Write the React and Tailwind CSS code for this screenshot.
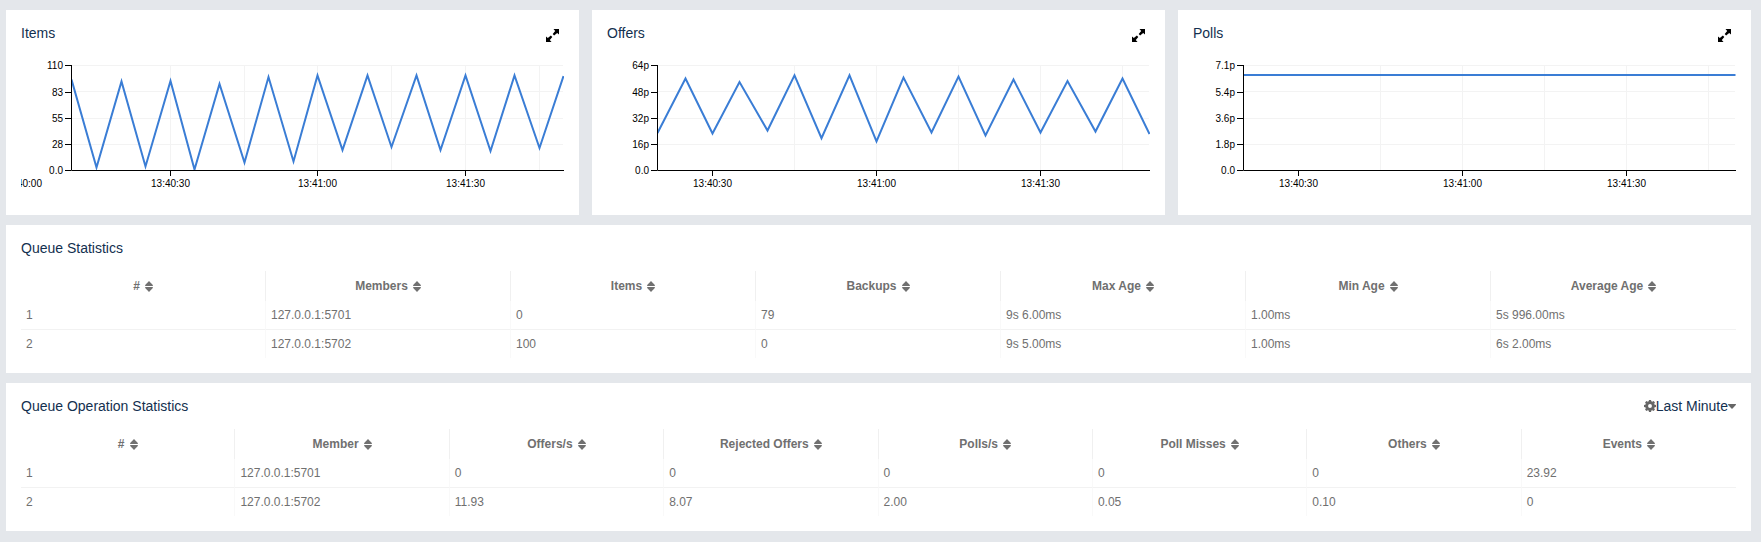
import React from "react";

const CHARTS = [
  {
    title: "Items",
    yLabels: ["110", "83", "55", "28", "0.0"],
    grid: [149.5, 223.5, 296.5, 370.5, 444.5, 518.5],
    ticks: [[1.5, "13:40:00"], [149.5, "13:40:30"], [296.5, "13:41:00"], [444.5, "13:41:30"]],
    line: "50.5,38.5 75.5,126.5 100.5,40.5 124.5,125.5 149.5,40 173.5,128.5 198.5,43 223.5,121.5 247.5,36 272.5,120.5 296.5,34.5 321.5,109 346.5,34.5 370.5,106 395.5,34.5 419.5,109 444.5,34.5 469.5,110 493.5,34.5 518.5,107 542.5,35",
  },
  {
    title: "Offers",
    yLabels: ["64p", "48p", "32p", "16p", "0.0"],
    grid: [187.5, 269.5, 351.5, 433.5, 515.5],
    ticks: [[105.5, "13:40:30"], [269.5, "13:41:00"], [433.5, "13:41:30"]],
    line: "50.5,92 78.5,37.5 105.5,92.5 132.5,41 160.5,89.5 187.5,34.3 214.5,97.2 242.5,34.3 269.5,100.3 296.5,36.6 324.5,91.4 351.5,35.6 378.5,94.5 406.5,38.5 433.5,91.5 460.5,40 488.5,90.5 515.5,37.5 542.5,93",
  },
  {
    title: "Polls",
    yLabels: ["7.1p", "5.4p", "3.6p", "1.8p", "0.0"],
    grid: [187.5, 269.5, 351.5, 433.5, 515.5],
    ticks: [[105.5, "13:40:30"], [269.5, "13:41:00"], [433.5, "13:41:30"]],
    line: "50.5,34 542.5,34",
  },
];

const GRID_Y = [24.5, 50.5, 77.5, 103.5];
const TICK_Y = [24.5, 51.5, 77.5, 103.5, 129.5];

const QUEUE_STATS = {
  columns: ["#", "Members", "Items", "Backups", "Max Age", "Min Age", "Average Age"],
  rows: [
    ["1", "127.0.0.1:5701", "0", "79", "9s 6.00ms", "1.00ms", "5s 996.00ms"],
    ["2", "127.0.0.1:5702", "100", "0", "9s 5.00ms", "1.00ms", "6s 2.00ms"],
  ],
};

const OPERATION_STATS = {
  columns: ["#", "Member", "Offers/s", "Rejected Offers", "Polls/s", "Poll Misses", "Others", "Events"],
  rows: [
    ["1", "127.0.0.1:5701", "0", "0", "0", "0", "0", "23.92"],
    ["2", "127.0.0.1:5702", "11.93", "8.07", "2.00", "0.05", "0.10", "0"],
  ],
};

const GEAR_TEETH = [0, 45, 90, 135];

function ExpandIcon() {
  return (
    <svg viewBox="0 0 13 13" className="block size-[13px] fill-black" aria-hidden="true">
      <path d="M7.5 0H13V5.500L11.200 3.900L8.100 6.500L6.700 5.100L9.200 1.900Z" />
      <path d="M5.500 13H0V7.500L1.800 9.100L4.900 6.500L6.300 7.900L3.800 11.100Z" />
    </svg>
  );
}

function SortIcon() {
  return (
    <svg viewBox="0 0 8 11" className="block h-[11px] w-2 shrink-0 fill-current" aria-hidden="true">
      <path d="M4 0L7.800 3.900Q8.300 5 7.400 5H.6Q-.3 5 .2 3.900Z" />
      <path d="M4 11L7.800 7.100Q8.300 6 7.400 6H.6Q-.3 6 .2 7.100Z" />
    </svg>
  );
}

function GearIcon() {
  return (
    <svg viewBox="-6 -6 12 12" className="block size-3" aria-hidden="true">
      <circle r="3.300" className="fill-none stroke-[#666] stroke-[2.700px]" />
      {GEAR_TEETH.map((angle) => (
        <g key={angle} transform={`rotate(${angle})`} className="fill-[#666]">
          <path d="M-1.500 -4L-1 -6H1L1.500 -4Z" />
          <path d="M-1.500 4L-1 6H1L1.500 4Z" />
        </g>
      ))}
    </svg>
  );
}

function ChartCard({ chart, index }) {
  const clip = `plot-${index}`;
  return (
    <section className="min-w-0 bg-white p-[15px]">
      <header className="flex h-4 items-start justify-between">
        <h2 className="text-sm leading-4 text-[#13304f]">{chart.title}</h2>
        <button type="button" aria-label={`Expand ${chart.title}`} className="mt-1 mr-[5px] cursor-pointer">
          <ExpandIcon />
        </button>
      </header>
      <svg viewBox="0 0 543 159" className="block h-auto w-full overflow-hidden" role="img" aria-label={`${chart.title} over time`}>
        <clipPath id={clip}>
          <rect x="50" y="24" width="493" height="106" />
        </clipPath>
        <g className="stroke-[#f3f3f3]">
          {GRID_Y.map((y) => <line key={y} x1="51" x2="542" y1={y} y2={y} />)}
          {chart.grid.map((x) => <line key={x} x1={x} x2={x} y1="25" y2="129" />)}
        </g>
        <polyline points={chart.line} clipPath={`url(#${clip})`} className="fill-none stroke-[#3a7dd5] stroke-2" />
        <g className="fill-none stroke-black">
          <path d="M50.500 24V129.500H543" />
          {TICK_Y.map((y) => <line key={y} x1="44" x2="50" y1={y} y2={y} />)}
          {chart.ticks.filter(([x]) => x > 50).map(([x]) => <line key={x} x1={x} x2={x} y1="129" y2="135" />)}
        </g>
        <g className="fill-black text-[10px]">
          {chart.yLabels.map((label, i) => (
            <text key={label} x="42" y={TICK_Y[i] + 3.5} textAnchor="end">{label}</text>
          ))}
          {chart.ticks.map(([x, label]) => (
            <text key={label} x={x} y="146" textAnchor="middle">{label}</text>
          ))}
        </g>
      </svg>
    </section>
  );
}

function StatsPanel({ title, table, children }) {
  return (
    <section className="bg-white p-[15px]">
      <header className="mb-[15px] flex h-4 items-center justify-between">
        <h2 className="text-sm leading-4 text-[#13304f]">{title}</h2>
        {children}
      </header>
      <table className="w-full table-fixed border-separate border-spacing-0 text-xs leading-4 text-[#707070]">
        <thead>
          <tr>
            {table.columns.map((name) => (
              <th key={name} scope="col" className="h-[30px] border-r border-[#f0f0f0] p-0 last:border-r-0">
                <button type="button" className="inline-flex cursor-pointer items-center gap-[5px] align-middle font-bold">
                  {name}
                  <SortIcon />
                </button>
              </th>
            ))}
          </tr>
        </thead>
        <tbody>
          {table.rows.map((row) => (
            <tr key={row[0]} className="group">
              {row.map((cell, i) => (
                <td key={i} className="border-r border-b border-r-[#f9f9f9] border-b-[#f2f2f2] px-[5px] py-1.5 last:border-r-0 group-last:border-b-0">
                  {cell}
                </td>
              ))}
            </tr>
          ))}
        </tbody>
      </table>
    </section>
  );
}

export default function App() {
  return (
    <main className="flex min-h-screen flex-col gap-[10px] bg-[#e4e7eb] pt-[10px] pr-[10px] pb-[10px] pl-1.5 font-['Liberation_Sans',Arial,sans-serif]">
      <div className="grid grid-cols-3 gap-[13px]">
        {CHARTS.map((chart, i) => <ChartCard key={chart.title} chart={chart} index={i} />)}
      </div>
      <StatsPanel title="Queue Statistics" table={QUEUE_STATS} />
      <StatsPanel title="Queue Operation Statistics" table={OPERATION_STATS}>
        <button type="button" className="flex cursor-pointer items-center text-sm leading-4 text-[#13304f]">
          <GearIcon />
          Last Minute
          <svg viewBox="0 0 8 5" className="block h-[5px] w-2 fill-[#666]" aria-hidden="true">
            <path d="M.4 0H7.600Q8.300 .2 7.800 .9L4.500 4.600Q4 5 3.500 4.600L.2 .9Q-.3 .2 .4 0Z" />
          </svg>
        </button>
      </StatsPanel>
    </main>
  );
}
